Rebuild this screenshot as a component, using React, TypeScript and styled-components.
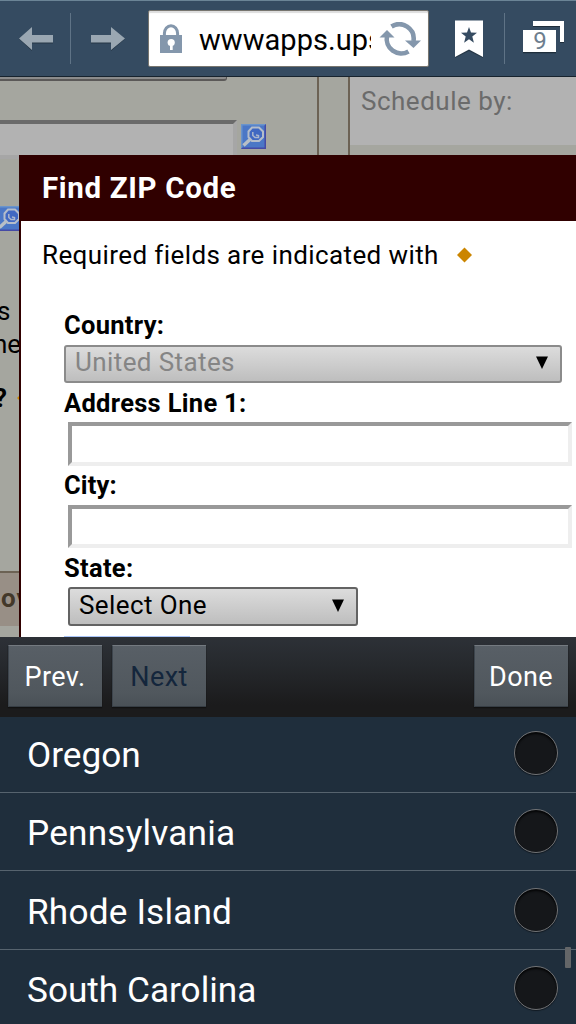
import React from "react";
import styled, { createGlobalStyle } from "styled-components";

const GlobalStyle = createGlobalStyle`
  *, *::before, *::after { box-sizing: border-box; }
  body { margin: 0; font-family: Roboto, "Liberation Sans", sans-serif; }
`;

const Screen = styled.div`
  width: 576px;
  height: 1024px;
  overflow: hidden;
  display: flex;
  flex-direction: column;
`;

const Toolbar = styled.header`
  height: 77px;
  flex: none;
  display: flex;
  align-items: flex-start;
  background: #354b61;
  border-top: 1px solid #6b8496;
  border-bottom: 1px solid #17232e;
`;

const ToolButton = styled.div<{ $width: number }>`
  width: ${(p) => p.$width}px;
  height: 75px;
  flex: none;
  svg { display: block; }
`;

const Divider = styled.div`
  width: 1px;
  height: 51px;
  margin-top: 12px;
  flex: none;
  background: #5f7386;
`;

const AddressBar = styled.div`
  width: 281px;
  height: 57px;
  margin: 9px 0 0 22px;
  flex: none;
  display: flex;
  align-items: center;
  background: #fff;
  border: 1px solid #77756f;
  border-radius: 2px;
  box-shadow: inset 0 2px 1px #ddd;
  overflow: hidden;
`;

const LockIcon = styled.svg`
  flex: none;
  margin-left: 11px;
`;

const Url = styled.div`
  width: 172px;
  margin-left: 17px;
  flex: none;
  overflow: hidden;
  white-space: nowrap;
  font-size: 29px;
  line-height: 40px;
  letter-spacing: 0.05px;
  color: #000;
  padding-top: 2px;
`;

const RefreshIcon = styled.svg`
  flex: none;
  margin-left: 8px;
`;

const Viewport = styled.main`
  position: relative;
  height: 560px;
  flex: none;
  overflow: hidden;
  background: #a5a69f;
`;

const Page = styled.div`
  display: flex;
  height: 100%;
`;

const LeftColumn = styled.div`
  width: 319px;
  flex: none;
  border-right: 2px solid #6c6254;
  display: flex;
  flex-direction: column;
`;

const Gutter = styled.div`
  width: 31px;
  flex: none;
  border-right: 2px solid #6c6254;
`;

const SchedulePanel = styled.div`
  flex: 1;
  height: 68px;
  padding-left: 11px;
  background: #b2b2b2;
  color: #6b6b6b;
  font-size: 26px;
  line-height: 48px;
  letter-spacing: 0.5px;
  white-space: nowrap;
`;

const SelectEdge = styled.div`
  width: 227px;
  height: 4px;
  flex: none;
  background: #8c8c8c;
  border-bottom: 2px solid #5b5958;
  border-right: 1px solid #5b5958;
  border-radius: 0 0 3px 0;
`;

const LookupRow = styled.div`
  display: flex;
  height: 39px;
  margin-top: 39px;
  flex: none;
`;

const PageInput = styled.div`
  width: 237px;
  height: 39px;
  flex: none;
  background: #b2b2b2;
  border-style: solid;
  border-width: 4px 4px 4px 0;
  border-color: #6a6a6a #a6a6a6 #a6a6a6;
`;

const LookupIcon = styled.svg<{ $left: number; $top: number }>`
  display: block;
  flex: none;
  margin: ${(p) => p.$top}px 0 0 ${(p) => p.$left}px;
`;

const PageText = styled.div<{ $top: number; $bold?: boolean; $shift: number }>`
  display: flex;
  align-items: center;
  height: 30px;
  flex: none;
  margin: ${(p) => p.$top}px 0 0 ${(p) => p.$shift}px;
  font-size: 26px;
  line-height: 30px;
  font-weight: ${(p) => (p.$bold ? 700 : 400)};
  color: #000;
`;

const Band = styled.div`
  height: 55px;
  margin-top: 158px;
  flex: none;
  border-top: 2px solid #6c6254;
  background: #988f86;
  color: #43382a;
  font-size: 26px;
  font-weight: 700;
  line-height: 51px;
  letter-spacing: 1px;
  padding-left: 1px;
`;

const Dialog = styled.section`
  position: absolute;
  top: 78px;
  left: 19px;
  width: 560px;
  height: 490px;
  background: #fff;
  border-left: 2px solid #300000;
`;

const DialogTitle = styled.h1`
  margin: 0;
  height: 66px;
  padding-left: 21px;
  background: #300000;
  color: #fff;
  font-size: 29.5px;
  font-weight: 700;
  line-height: 66px;
  letter-spacing: 0.65px;
`;

const RequiredNote = styled.p`
  margin: 0;
  height: 68px;
  padding-left: 21px;
  display: flex;
  align-items: center;
  font-size: 26px;
  line-height: 68px;
  letter-spacing: 0.4px;
  white-space: nowrap;
  color: #000;
`;

const Diamond = styled.svg<{ $left: number }>`
  flex: none;
  margin-left: ${(p) => p.$left}px;
`;

const Form = styled.form`
  display: flex;
  flex-direction: column;
  align-items: flex-start;
  padding: 21px 0 0 43px;
`;

const Label = styled.label<{ $top?: number; $spacing?: number }>`
  height: 30px;
  margin-top: ${(p) => p.$top ?? 0}px;
  font-size: 25.5px;
  font-weight: 700;
  line-height: 30px;
  letter-spacing: ${(p) => p.$spacing ?? 0}px;
  white-space: nowrap;
  color: #000;
`;

const SelectBox = styled.div<{ $width: number; $left: number; $top: number; $disabled?: boolean }>`
  width: ${(p) => p.$width}px;
  height: ${(p) => (p.$disabled ? 38 : 39)}px;
  margin: ${(p) => p.$top}px 0 0 ${(p) => p.$left}px;
  padding: 0 12px 3px 9px;
  display: flex;
  align-items: center;
  justify-content: space-between;
  border: 2px solid ${(p) => (p.$disabled ? "#8b8b8b" : "#636363")};
  border-radius: 3px;
  background: linear-gradient(#dcdcdc, #bebebe);
  color: ${(p) => (p.$disabled ? "#858585" : "#000")};
  font-size: 26px;
  line-height: 33px;
  letter-spacing: 0.4px;
  white-space: nowrap;
`;

const TextField = styled.div<{ $top: number; $height: number }>`
  width: 504px;
  height: ${(p) => p.$height}px;
  margin: ${(p) => p.$top}px 0 0 4px;
  background: #fff;
  border: 4px solid;
  border-color: #999 #eee #eee #999;
`;

const SubmitButton = styled.div`
  width: 126px;
  height: 30px;
  margin-top: 10px;
  background: #4a7ce0;
  border-top: 2px solid #a9c4f8;
`;

const PickerBar = styled.div`
  height: 80px;
  flex: none;
  display: flex;
  align-items: flex-start;
  gap: 10px;
  padding: 8px 8px 0;
  background: linear-gradient(#2d3137, #26292d 35%, #1b1b1c 85%, #1b1b1c);
`;

const PickerButton = styled.div<{ $muted?: boolean; $end?: boolean }>`
  width: 94px;
  height: 62px;
  margin-left: ${(p) => (p.$end ? "auto" : 0)};
  padding-right: 1px;
  background: linear-gradient(#585f66, #50575d 80%, #4a5157);
  border-top: 1px solid #747a80;
  border-left: 1px solid #3d454d;
  border-bottom: 1px solid #363d44;
  box-shadow: 0 1px 1px #111;
  color: ${(p) => (p.$muted ? "#14263c" : "#fff")};
  font-size: 27px;
  line-height: 62px;
  letter-spacing: 0.4px;
  text-align: center;
`;

const OptionList = styled.div`
  position: relative;
  height: 307px;
  flex: none;
  overflow: hidden;
  background: #1f2e3c;
`;

const Option = styled.div<{ $height: number }>`
  height: ${(p) => p.$height}px;
  display: flex;
  align-items: flex-end;
  justify-content: space-between;
  padding: 0 18px 17px 27px;
  border-bottom: 1px solid #56636e;
  color: #fff;
`;

const OptionName = styled.span<{ $spacing: number }>`
  font-size: 35.2px;
  line-height: 40px;
  letter-spacing: ${(p) => p.$spacing}px;
  white-space: nowrap;
`;

const Radio = styled.span`
  width: 44px;
  height: 44px;
  flex: none;
  border-radius: 50%;
  border: 1.5px solid #717376;
  background: #15171a;
  box-shadow: inset 0 2px 2px #050607, 0 1px 1px #101820;
`;

const ScrollThumb = styled.div`
  position: absolute;
  top: 230px;
  right: 5px;
  width: 6px;
  height: 21px;
  border-radius: 1px;
  background: #646668;
`;

const Lookup = ({ left, top }: { left: number; top: number }) => (
  <LookupIcon $left={left} $top={top} width="25" height="25" viewBox="0 0 25 25">
    <rect width="25" height="25" fill="#4b77c6" />
    <path d="M0 25V0H25L23.5 1.5H1.5V23.5Z" fill="#6a94cc" />
    <path d="M25 0V25H0L1.5 23.5H23.5V1.5Z" fill="#454aa5" />
    <path d="M11 3.5H18L22 7.5V13L18 17H11L7.5 13V7.5Z" fill="#4068c2" stroke="#b4bdca" strokeWidth="2" />
    <path d="M9 15.5L2.5 21.5" stroke="#b8bfc6" strokeWidth="3.4" />
    <path d="M11.8 8V11.5L14 13.5H17.5V11.5L15 11" fill="none" stroke="#aab6cd" strokeWidth="1.5" />
  </LookupIcon>
);

const Mark = ({ left }: { left: number }) => (
  <Diamond $left={left} width="15" height="16" viewBox="0 0 15 16">
    <path d="M7.5 .5L15 8L7.5 15.5L0 8Z" fill="#cb8500" />
  </Diamond>
);

const Caret = () => (
  <svg width="12" height="13" viewBox="0 0 12 13">
    <path d="M0 0.5H12L6 13Z" fill="#000" />
  </svg>
);

const options = [
  { name: "Oregon", height: 76, spacing: 0 },
  { name: "Pennsylvania", height: 78, spacing: 0.2 },
  { name: "Rhode Island", height: 79, spacing: 0.17 },
  { name: "South Carolina", height: 78, spacing: 0 },
];

export default function App() {
  return (
    <>
      <GlobalStyle />
      <Screen>
        <Toolbar>
          <ToolButton $width={70}>
            <svg width="70" height="75" viewBox="0 1 70 75">
              <path d="M19 39L32 28V36H53V43.5H32V51Z" fill="#263746" />
              <path d="M19 38.5L32 27V35H53V42.5H32V50Z" fill="#9aa7b2" />
            </svg>
          </ToolButton>
          <Divider />
          <ToolButton $width={55}>
            <svg width="55" height="75" viewBox="71 1 55 75">
              <path d="M125 39L111 28V36H91V43.5H111V51Z" fill="#263746" />
              <path d="M125 38.5L111 27V35H91V42.5H111V50Z" fill="#9aa7b2" />
            </svg>
          </ToolButton>
          <AddressBar>
            <LockIcon width="22" height="30" viewBox="160 24 22 30">
              <path d="M164.400 36V33.500a6.600 7.700 0 0 1 13.200 0V36" fill="none" stroke="#8497ac" strokeWidth="3" />
              <path d="M160 35H182V53H160Z" fill="#8497ac" />
              <circle cx="171.200" cy="42.500" r="3.600" fill="#fff" />
              <path d="M170 43H172.700V50H170Z" fill="#fff" />
            </LockIcon>
            <Url>wwwapps.ups.com</Url>
            <RefreshIcon width="42" height="34" viewBox="379 21 42 34">
              <path d="M391.500 25.500A14.500 14.500 0 0 1 413.500 40" fill="none" stroke="#8497ac" strokeWidth="4.600" />
              <path d="M408.500 50.500A14.500 14.500 0 0 1 387 35" fill="none" stroke="#8497ac" strokeWidth="4.600" />
              <path d="M379.500 36.500L387 29L394.500 36.500Z" fill="#8497ac" />
              <path d="M405 39.500H421L413.500 47Z" fill="#8497ac" />
            </RefreshIcon>
          </AddressBar>
          <ToolButton $width={75}>
            <svg width="75" height="75" viewBox="429 1 75 75">
              <path d="M455 22H483V58L469 51L455 58Z" fill="#263746" />
              <path d="M455 20.500H483V57L469 49.500L455 57Z" fill="#fff" />
              <path d="M469 27L471 32.600L477 32.800L472.300 36.500L473.900 42.800L469 39.200L464.100 42.800L465.700 36.500L461 32.800L467 32.600Z" fill="#354b61" />
            </svg>
          </ToolButton>
          <Divider />
          <ToolButton $width={71}>
            <svg width="71" height="75" viewBox="505 1 71 75">
              <path d="M533 22H564V43H560V27H533ZM523 31H556V53.200H523Z" fill="#1f2e3b" />
              <path d="M533 21H564V42H560V26H533Z" fill="#fff" />
              <path d="M523 30H556V52H523Z" fill="#fff" />
              <text x="540" y="49" textAnchor="middle" fontSize="24" fill="#6d7e8e">9</text>
            </svg>
          </ToolButton>
        </Toolbar>

        <Viewport>
          <Page>
            <LeftColumn>
              <SelectEdge />
              <LookupRow>
                <PageInput />
                <Lookup left={4} top={4} />
              </LookupRow>
              <Lookup left={-3} top={47} />
              <PageText $top={65} $shift={-3}>s</PageText>
              <PageText $top={3} $shift={-7}>ne</PageText>
              <PageText $top={24} $bold $shift={-6}>
                ?
                <Mark left={10} />
              </PageText>
              <Band>ov</Band>
            </LeftColumn>
            <Gutter />
            <SchedulePanel>Schedule by:</SchedulePanel>
          </Page>

          <Dialog>
            <DialogTitle>Find ZIP Code</DialogTitle>
            <RequiredNote>
              Required fields are indicated with
              <Mark left={18} />
            </RequiredNote>
            <Form>
              <Label $spacing={0.3}>Country:</Label>
              <SelectBox $width={498} $left={0} $top={5} $disabled>
                United States
                <Caret />
              </SelectBox>
              <Label $top={5} $spacing={0.3}>Address Line 1:</Label>
              <TextField $top={4} $height={44} />
              <Label $top={4} $spacing={0.15}>City:</Label>
              <TextField $top={5} $height={43} />
              <Label $top={5} $spacing={0.3}>State:</Label>
              <SelectBox $width={290} $left={4} $top={4}>
                Select One
                <Caret />
              </SelectBox>
              <SubmitButton />
            </Form>
          </Dialog>
        </Viewport>

        <PickerBar>
          <PickerButton>Prev.</PickerButton>
          <PickerButton $muted>Next</PickerButton>
          <PickerButton $end>Done</PickerButton>
        </PickerBar>

        <OptionList>
          {options.map((o) => (
            <Option key={o.name} $height={o.height}>
              <OptionName $spacing={o.spacing}>{o.name}</OptionName>
              <Radio />
            </Option>
          ))}
          <ScrollThumb />
        </OptionList>
      </Screen>
    </>
  );
}
